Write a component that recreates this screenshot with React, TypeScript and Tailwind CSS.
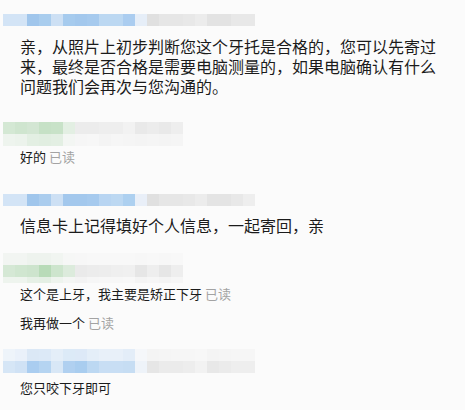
const blueA = [
  "#d3e4f6", "#d3e4f6", "#a0c6ec", "#a9cdee", "#cde0f4", "#a6cbee", "#a3c8ed",
  "#a6caee", "#bcd8f2", "#bcd8f2", "#abcdf0", "#e6eef8", "#e0e0e0", "#e6e6e6",
  "#e6e6e6", "#e8e8e8", "#ececec", "#e3e3e3", "#e3e3e3", "#e8e8e8", "#e8e8e8",
];

const blueB = [
  "#d3e4f6", "#d3e4f6", "#a0c6ec", "#abcdee", "#cde0f4", "#a3c8ed", "#a3c8ed",
  "#a6caee", "#b8d5f2", "#bcd8f2", "#add0f0", "#e9eff8", "#e0e0e0", "#e6e6e6",
  "#e6e6e6", "#e8e8e8", "#ececec", "#e4e4e4", "#e4e4e4", "#e8e8e8", "#eeeeee",
];

const blueCTop = [
  "#eef4fa", "#eaf1fa", "#dbe8f6", "#dce9f7", "#e4eef8", "#dceaf7", "#dde9f7",
  "#e4eef8", "#e8f0f9", "#e8f0f9", "#e3edf8", "#f5f7fa", "#f4f4f4", "#f5f5f5",
  "#f6f6f6", "#f6f6f6", "#f7f7f7", "#f4f4f4", "#f5f5f5", "#f6f6f6", "#f6f6f6",
];

const blueC = [
  "#d6e6f6", "#d0e2f5", "#aacdf0", "#b5d4f1", "#d8e7f6", "#b0d0f0", "#a9cdef",
  "#bcd8f2", "#c8def4", "#c8def4", "#c6ddf3", "#eef3f9", "#e6e6e6", "#ebebeb",
  "#ebebeb", "#ededed", "#f2f2f2", "#e8e8e8", "#ebebeb", "#eeeeee", "#eeeeee",
];

const greenA = [
  "#d4e8d4", "#cfe5cf", "#d3e6d3", "#c6e1c6", "#c8e2c8", "#e3efe3", "#ececec",
  "#ececec", "#eeeeee", "#eeeeee", "#f2f2f2", "#e9e9e9", "#ececec", "#e9e9e9",
  "#eeeeee",
];

const greenABottom = [
  "#eef4ee", "#ecf3ec", "#e3efe3", "#e1eee1", "#e3efe3", "#f3f6f3", "#f6f6f6",
  "#f7f7f7", "#f4f4f4", "#f6f6f6", "#f5f5f5", "#f4f4f4", "#f5f5f5", "#f4f4f4",
  "#f5f5f5",
];

const greenBTop = [
  "#f2f5f2", "#f2f5f2", "#eef3ee", "#eef3ee", "#f1f5f1", "#f6f7f6", "#f7f7f7",
  "#f8f8f8", "#f8f8f8", "#f8f8f8", "#f8f8f8", "#f7f7f7", "#f8f8f8", "#f7f7f7",
  "#f8f8f8",
];

const greenB = [
  "#d5e8d5", "#d0e6d0", "#cde4cd", "#b8dbb8", "#cde5cd", "#dcebdc", "#eaeaea",
  "#ececec", "#ededed", "#efefef", "#f0f0f0", "#e6e6e6", "#eeeeee", "#e6e6e6",
  "#eeeeee",
];

const greenBBottom = [
  "#eef4ee", "#eef4ee", "#e6f0e6", "#e4efe4", "#eef4ee", "#f4f6f4", "#f3f3f3",
  "#f6f6f6", "#f7f7f7", "#f7f7f7", "#f8f8f8", "#f4f4f4", "#f6f6f6", "#f4f4f4",
  "#f6f6f6",
];

function Row({ colors, h = "h-3" }: { colors: string[]; h?: string }) {
  return (
    <div className={`flex ${h}`}>
      {colors.map((c, i) => (
        <div key={i} className="w-3 shrink-0" style={{ backgroundColor: c }} />
      ))}
    </div>
  );
}

function Big({ children, className = "" }: { children: React.ReactNode; className?: string }) {
  return (
    <p className={`pl-5 w-[444px] text-[16px] leading-[20px] text-[#1b1b1b] ${className}`}>
      {children}
    </p>
  );
}

function Small({ text, read = false, className = "" }: { text: string; read?: boolean; className?: string }) {
  return (
    <p className={`pl-5 text-[13px] leading-[18px] text-[#1b1b1b] ${className}`}>
      {text}
      {read && <span className="text-[#a3a3a3]"> 已读</span>}
    </p>
  );
}

export default function App() {
  return (
    <div
      className="w-[465px] h-[410px] overflow-hidden bg-[#fbfbfb] pl-[3px] pt-[14px]"
      style={{ fontFamily: '"Noto Sans CJK SC", "Noto Sans", sans-serif' }}
    >
      <Row colors={blueA} />
      <Big className="mt-[10px] -ml-[3px]">
        亲，从照片上初步判断您这个牙托是合格的，您可以先寄过来，最终是否合格是需要电脑测量的，如果电脑确认有什么问题我们会再次与您沟通的。
      </Big>

      <div className="mt-[26px]">
        <Row colors={greenA} />
        <Row colors={greenABottom} />
      </div>
      <Small text="好的" read className="mt-[2px] -ml-[3px]" />

      <div className="mt-[28px]">
        <Row colors={blueB} />
      </div>
      <Big className="mt-[9px] -ml-[3px]">信息卡上记得填好个人信息，一起寄回，亲</Big>

      <div className="mt-[18px]">
        <Row colors={greenBTop} h="h-[12px]" />
        <Row colors={greenB} />
        <Row colors={greenBBottom} h="h-[6px]" />
      </div>
      <Small text="这个是上牙，我主要是矫正下牙" read className="mt-[2px] -ml-[3px]" />
      <Small text="我再做一个" read className="mt-[11px] -ml-[3px]" />

      <div className="mt-[17px]">
        <Row colors={blueCTop} />
        <Row colors={blueC} />
      </div>
      <Small text="您只咬下牙即可" className="mt-[6px] -ml-[3px]" />
    </div>
  );
}
